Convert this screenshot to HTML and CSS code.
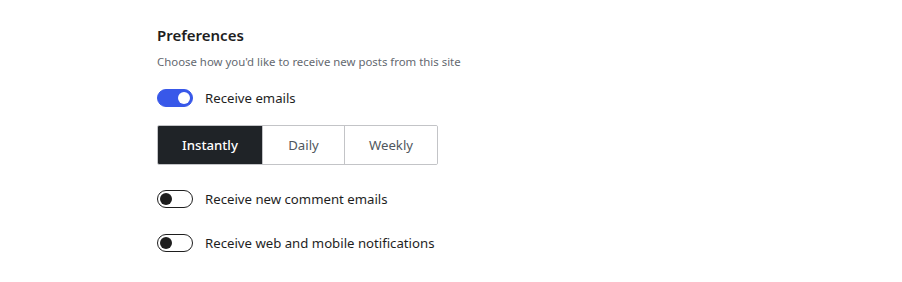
FILE: index.html
```html
<!DOCTYPE html>
<html>
<head>
<meta charset="utf-8">
<link rel="stylesheet" href="styles.css">
</head>
<body>
<section class="prefs">
  <h2 class="title">Preferences</h2>
  <p class="desc">Choose how you'd like to receive new posts from this site</p>
  <div class="row first">
    <span class="toggle on"><span class="knob"></span></span>
    <span class="label">Receive emails</span>
  </div>
  <div class="seg">
    <button class="seg-btn active w1">Instantly</button>
    <button class="seg-btn w2">Daily</button>
    <button class="seg-btn w3">Weekly</button>
  </div>
  <div class="row r2">
    <span class="toggle"><span class="knob"></span></span>
    <span class="label">Receive new comment emails</span>
  </div>
  <div class="row r3">
    <span class="toggle"><span class="knob"></span></span>
    <span class="label">Receive web and mobile notifications</span>
  </div>
</section>
</body>
</html>
```

FILE: styles.css
```css
html, body {
  margin: 0;
  padding: 0;
  background: #fff;
}
body {
  font-family: "Noto Sans", "Open Sans", sans-serif;
  color: #1e1e1e;
}
.prefs {
  padding: 24px 0 0 157px;
}
.title {
  margin: 0;
  font-size: 15px;
  font-weight: 600;
  line-height: 22px;
  color: #1e1e1e;
}
.desc {
  margin: 8px 0 0;
  font-size: 11.4px;
  line-height: 16px;
  color: #646970;
}
.row {
  display: flex;
  align-items: center;
  gap: 12px;
  height: 18px;
}
.first { margin-top: 19px; }
.r2 { margin-top: 25px; }
.r3 { margin-top: 26px; }
.label {
  font-size: 13.2px;
  color: #1e1e1e;
}
.toggle {
  box-sizing: border-box;
  width: 36px;
  height: 18px;
  border-radius: 9px;
  border: 1px solid #1e1e1e;
  background: #fff;
  display: flex;
  align-items: center;
  padding: 0 2px;
}
.toggle .knob {
  width: 12px;
  height: 12px;
  border-radius: 50%;
  background: #1e1e1e;
}
.toggle.on {
  background: #3858e9;
  border-color: #3858e9;
  justify-content: flex-end;
}
.toggle.on .knob {
  background: #fff;
}
.seg {
  display: flex;
  margin-top: 18px;
  width: 281px;
  height: 40px;
  box-sizing: border-box;
  border: 1px solid #c3c4c7;
  border-radius: 2px;
  overflow: hidden;
}
.seg-btn {
  font-family: inherit;
  font-size: 13.2px;
  border: 0;
  border-left: 1px solid #c3c4c7;
  background: #fff;
  color: #50575e;
  padding: 0;
  height: 100%;
}
.seg-btn:first-child { border-left: 0; }
.seg-btn.active {
  background: #1f2327;
  color: #fff;
  font-weight: 500;
}
.w1 { width: 104px; }
.w2 { width: 82px; }
.w3 { flex: 1; }
```
